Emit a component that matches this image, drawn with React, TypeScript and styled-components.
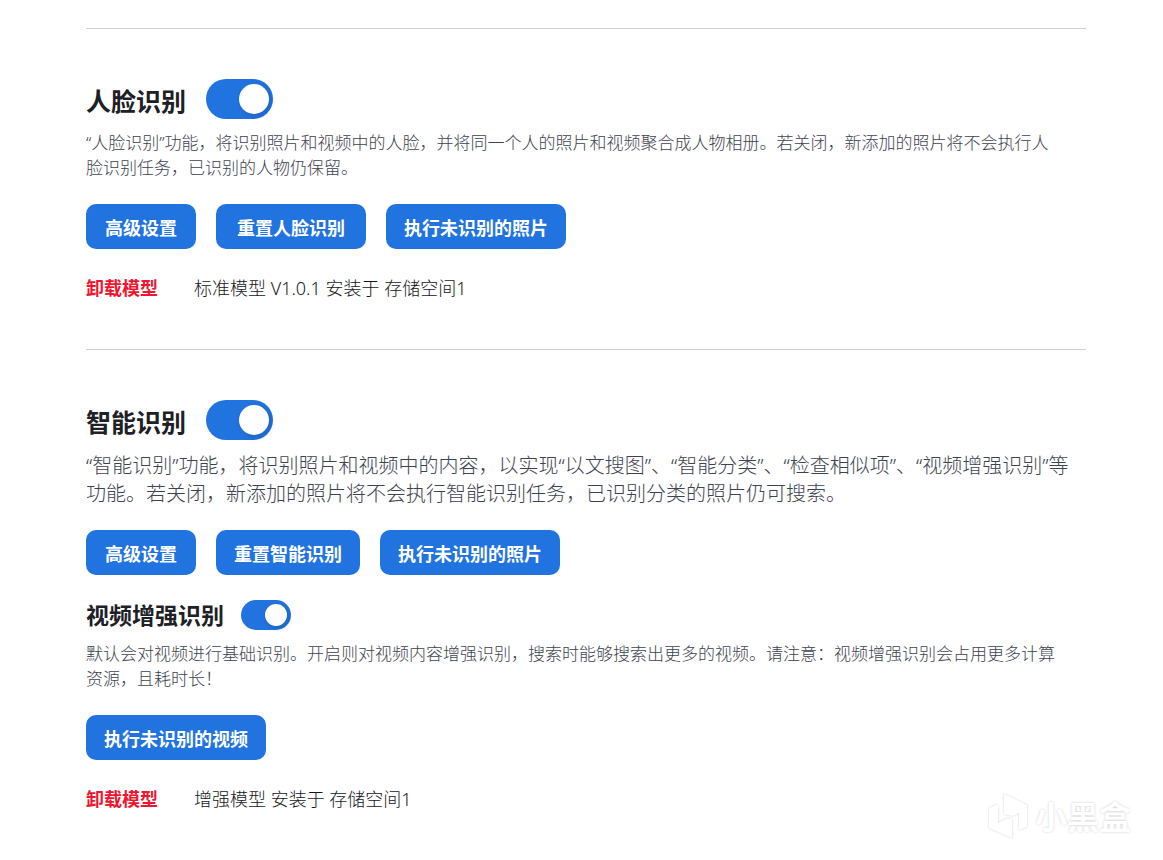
import React from "react";
import styled, { createGlobalStyle } from "styled-components";

const GlobalStyle = createGlobalStyle`
  * {
    box-sizing: border-box;
  }
  body {
    margin: 0;
    background: #ffffff;
    color: #14161a;
    font-family: "Noto Sans", "Noto Sans CJK SC", sans-serif;
    font-size: 18px;
    font-weight: 300;
  }
`;

const Page = styled.main`
  position: relative;
  min-height: 100vh;
  padding: 28px 77px 20px 86px;
`;

const Section = styled.section`
  border-top: 1px solid #cdd0d6;
  padding: 50px 0 48px;

  &:last-of-type {
    padding-bottom: 0;
  }
`;

const TitleRow = styled.div<{ $small?: boolean }>`
  display: flex;
  align-items: center;
  gap: ${(p) => (p.$small ? 17 : 20)}px;
  height: ${(p) => (p.$small ? 30 : 40)}px;
  margin-top: ${(p) => (p.$small ? 25 : 0)}px;
`;

const Title = styled.label<{ $small?: boolean }>`
  padding-top: ${(p) => (p.$small ? 0 : 3)}px;
  color: #1d2025;
  font-size: ${(p) => (p.$small ? 23 : 25)}px;
  font-weight: 700;
  line-height: 30px;
`;

const Switch = styled.input<{ $small?: boolean }>`
  appearance: none;
  display: flex;
  align-items: center;
  justify-content: flex-start;
  width: ${(p) => (p.$small ? 50 : 67)}px;
  height: ${(p) => (p.$small ? 30 : 40)}px;
  margin: 0;
  padding: 0 4px;
  border-radius: 20px;
  background: #a9adb5;
  cursor: pointer;

  &:checked {
    justify-content: flex-end;
    background: #2173df;
  }

  &::before {
    content: "";
    width: ${(p) => (p.$small ? 22 : 30)}px;
    height: ${(p) => (p.$small ? 22 : 30)}px;
    border-radius: 50%;
    background: #ffffff;
    box-shadow: 2px 2px 6px rgba(0, 0, 0, 0.15);
  }
`;

const Description = styled.p<{ $large?: boolean }>`
  margin: ${(p) => (p.$large ? "12px 0 22px" : "11px 0 24px")};
  padding-right: ${(p) => (p.$large ? 0 : 24)}px;
  color: #3c4350;
  font-size: ${(p) => (p.$large ? 20 : 17)}px;
  line-height: ${(p) => (p.$large ? 28 : 25)}px;
`;

const Actions = styled.div`
  display: flex;
  flex-wrap: wrap;
  gap: 20px;
`;

const Button = styled.button<{ $wide?: boolean }>`
  height: 45px;
  min-width: 110px;
  padding: 0 ${(p) => (p.$wide ? 21 : 18)}px;
  border: 0;
  border-radius: 10px;
  background: #2173df;
  color: #ffffff;
  font: inherit;
  font-weight: 700;
  cursor: pointer;
`;

const ModelRow = styled.div`
  display: flex;
  align-items: center;
  gap: 36px;
  margin-top: 26px;
  line-height: 26px;
`;

const Uninstall = styled.button`
  padding: 0;
  border: 0;
  background: none;
  color: #f0142f;
  font: inherit;
  font-weight: 700;
  cursor: pointer;
`;

const Watermark = styled.div`
  position: absolute;
  right: 32px;
  bottom: 20px;
  display: flex;
  align-items: center;
  gap: 7px;
  color: #ffffff;
  font-size: 32px;
  font-weight: 700;
  line-height: 46px;
  text-shadow: 0 0 3px rgba(0, 0, 0, 0.18);
  pointer-events: none;
`;

const Logo = styled.svg`
  width: 40px;
  height: 46px;
  overflow: visible;
  filter: drop-shadow(0 0 1px rgba(0, 0, 0, 0.18));
`;

export default function App() {
  return (
    <>
      <GlobalStyle />
      <Page>
        <Section>
          <TitleRow>
            <Title htmlFor="face">人脸识别</Title>
            <Switch id="face" type="checkbox" role="switch" defaultChecked />
          </TitleRow>
          <Description>
            “人脸识别”功能，将识别照片和视频中的人脸，并将同一个人的照片和视频聚合成人物相册。若关闭，新添加的照片将不会执行人脸识别任务，已识别的人物仍保留。
          </Description>
          <Actions>
            <Button>高级设置</Button>
            <Button $wide>重置人脸识别</Button>
            <Button>执行未识别的照片</Button>
          </Actions>
          <ModelRow>
            <Uninstall>卸载模型</Uninstall>
            <span>标准模型 V1.0.1 安装于 存储空间1</span>
          </ModelRow>
        </Section>

        <Section>
          <TitleRow>
            <Title htmlFor="smart">智能识别</Title>
            <Switch id="smart" type="checkbox" role="switch" defaultChecked />
          </TitleRow>
          <Description $large>
            “智能识别”功能，将识别照片和视频中的内容，以实现“以文搜图”、“智能分类”、“检查相似项”、“视频增强识别”等功能。若关闭，新添加的照片将不会执行智能识别任务，已识别分类的照片仍可搜索。
          </Description>
          <Actions>
            <Button>高级设置</Button>
            <Button>重置智能识别</Button>
            <Button>执行未识别的照片</Button>
          </Actions>

          <TitleRow $small>
            <Title htmlFor="video" $small>视频增强识别</Title>
            <Switch id="video" type="checkbox" role="switch" $small defaultChecked />
          </TitleRow>
          <Description>
            默认会对视频进行基础识别。开启则对视频内容增强识别，搜索时能够搜索出更多的视频。请注意：视频增强识别会占用更多计算资源，且耗时长！
          </Description>
          <Actions>
            <Button>执行未识别的视频</Button>
          </Actions>
          <ModelRow>
            <Uninstall>卸载模型</Uninstall>
            <span>增强模型 安装于 存储空间1</span>
          </ModelRow>
        </Section>

        <Watermark>
          <Logo viewBox="0 0 40 46" fill="#ffffff" aria-hidden="true">
            <path d="M1 14 L10 10 V29 L18 25 H24 V44 L1 34 Z" />
            <path d="M16 0 L39 11 V33 L31 36 V19 L24 22 L16 20 Z" />
          </Logo>
          <span>小黑盒</span>
        </Watermark>
      </Page>
    </>
  );
}
